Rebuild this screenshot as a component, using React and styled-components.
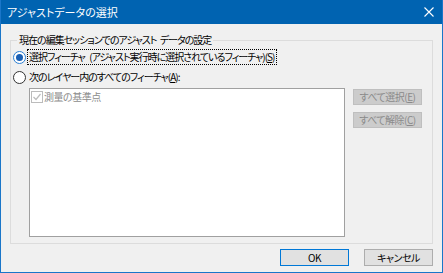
import React from "react";
import styled, { createGlobalStyle } from "styled-components";

const GlobalStyle = createGlobalStyle`
  html, body {
    margin: 0;
    padding: 0;
    background: #ffffff;
  }
  * {
    box-sizing: border-box;
  }
`;

const Window = styled.main`
  width: 443px;
  height: 273px;
  display: flex;
  flex-direction: column;
  background: #f0f0f0;
  border: 1px solid #1a76c9;
  border-top: none;
  font-family: "Noto Sans CJK JP", "Noto Sans", sans-serif;
  font-feature-settings: "palt";
  font-size: 10px;
  letter-spacing: -1px;
  color: #000;
`;

const TitleBar = styled.header`
  height: 24px;
  flex: none;
  display: flex;
  align-items: center;
  justify-content: space-between;
  padding: 0 8px 0 6px;
  background: #0063b1;
  color: #ffffff;
  font-size: 11px;
  letter-spacing: 0;
`;

const Body = styled.section`
  flex: 1;
  display: flex;
  flex-direction: column;
  padding: 9px 9px 0 9px;
`;

const Group = styled.fieldset`
  margin: 0;
  padding: 0 10px 6px 2px;
  border: 1px solid #dcdcdc;
  display: flex;
  flex-direction: column;
`;

const Legend = styled.legend`
  margin-left: 4px;
  padding: 0 2px;
  line-height: 14px;
  word-spacing: 2px;
`;

const RadioRow = styled.label`
  display: flex;
  align-items: center;
  height: 14px;
  margin-top: ${(p) => p.$top}px;
  line-height: 14px;
`;

const Radio = styled.span`
  width: 13px;
  height: 13px;
  flex: none;
  border-radius: 50%;
  border: 1px solid ${(p) => (p.$checked ? "#2a7fd4" : "#333333")};
  background: #ffffff;
  display: flex;
  align-items: center;
  justify-content: center;
  &::after {
    content: "";
    width: 7px;
    height: 7px;
    border-radius: 50%;
    background: ${(p) => (p.$checked ? "#1a5fb4" : "transparent")};
  }
`;

const RadioText = styled.span`
  margin-left: 1px;
  padding: 0 2px 0 1px;
  border: 1px dotted ${(p) => (p.$focus ? "#000" : "transparent")};
  white-space: nowrap;
  letter-spacing: -1px;
  word-spacing: 3px;
`;

const Key = styled.u`
  text-decoration: underline;
  text-underline-offset: 1px;
`;

const ListArea = styled.div`
  display: flex;
  margin-top: 4px;
  padding-left: 16px;
  gap: 8px;
`;

const ListBox = styled.div`
  width: 316px;
  height: 149px;
  background: #ffffff;
  border: 1px solid #a0a0a0;
  padding: 1px;
`;

const ListItem = styled.div`
  display: flex;
  align-items: center;
  height: 13px;
  color: #8d8d8d;
  gap: 1px;
  letter-spacing: -0.5px;
`;

const CheckBox = styled.span`
  width: 12px;
  height: 12px;
  flex: none;
  border: 1px solid #bcbcbc;
  display: flex;
  align-items: center;
  justify-content: center;
`;

const SideButtons = styled.div`
  display: flex;
  flex-direction: column;
  gap: 7px;
  padding-top: 1px;
`;

const Button = styled.button`
  font: inherit;
  font-feature-settings: "palt";
  letter-spacing: -0.5px;
  width: 69px;
  height: ${(p) => p.$h || 16}px;
  padding: 0;
  line-height: 1;
  display: flex;
  align-items: center;
  justify-content: center;
  border: 1px solid ${(p) => (p.$default ? "#0078d7" : p.disabled ? "#bfbfbf" : "#adadad")};
  background: ${(p) => (p.disabled ? "#cccccc" : "#e1e1e1")};
  color: ${(p) => (p.disabled ? "#8a8a8a" : "#000")};
`;

const Footer = styled.footer`
  display: flex;
  justify-content: flex-end;
  gap: 15px;
  padding-top: 5px;
`;

const CloseIcon = () => (
  <svg width="10" height="10" viewBox="0 0 10 10">
    <path d="M0.5 0.5 L9.5 9.5 M9.5 0.5 L0.5 9.5" stroke="#fff" strokeWidth="1.1" />
  </svg>
);

const CheckMark = () => (
  <svg width="10" height="10" viewBox="0 0 10 10">
    <path d="M1.5 5 L4 7.5 L8.5 2" stroke="#bcbcbc" strokeWidth="1.2" fill="none" />
  </svg>
);

const App = () => {
  return (
    <>
      <GlobalStyle />
      <Window>
        <TitleBar>
          <span>アジャストデータの選択</span>
          <CloseIcon />
        </TitleBar>
        <Body>
          <Group>
            <Legend>現在の編集セッションでのアジャスト データの設定</Legend>
            <RadioRow $top={3}>
              <Radio $checked />
              <RadioText $focus>
                選択フィーチャ (アジャスト実行時に選択されているフィーチャ)(<Key>S</Key>)
              </RadioText>
            </RadioRow>
            <RadioRow $top={6}>
              <Radio />
              <RadioText>
                次のレイヤー内のすべてのフィーチャ(<Key>A</Key>):
              </RadioText>
            </RadioRow>
            <ListArea>
              <ListBox>
                <ListItem>
                  <CheckBox>
                    <CheckMark />
                  </CheckBox>
                  測量の基準点
                </ListItem>
              </ListBox>
              <SideButtons>
                <Button disabled>
                  すべて選択(<Key>E</Key>)
                </Button>
                <Button disabled>
                  すべて解除(<Key>C</Key>)
                </Button>
              </SideButtons>
            </ListArea>
          </Group>
          <Footer>
            <Button $default $h={17}>OK</Button>
            <Button $h={17}>キャンセル</Button>
          </Footer>
        </Body>
      </Window>
    </>
  );
};

export default App;
